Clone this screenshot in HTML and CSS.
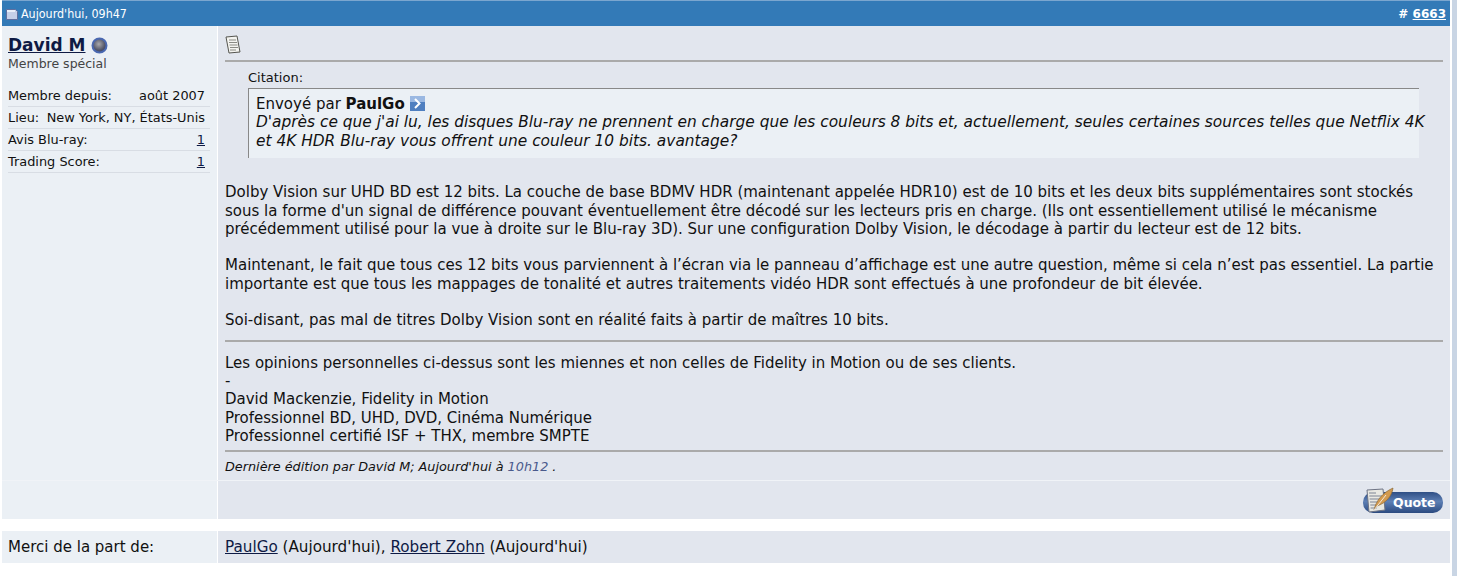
FILE: index.html
```html
<!DOCTYPE html>
<html lang="fr">
<head>
    <meta charset="UTF-8">
    <title>Post 6663</title>
    <link rel="stylesheet" href="styles.css">
</head>
<body>
<div class="page">
    <div class="post">
        <!-- Post header -->
        <div class="post-head">
            <span class="post-date">
                <svg class="date-icon" width="12" height="12" viewBox="0 0 12 12"><path d="M0.500 1.500h9l2 2v8h-11z" fill="#c5cfe8" stroke="#5f6f9f"/><path d="M1 2h8v2H1z" fill="#e9eef9"/></svg>
                Aujourd'hui, 09h47
            </span>
            <span class="post-num"># <a href="#">6663</a></span>
        </div>

        <div class="post-body">
            <div class="user-col">
                <div class="user-name"><a href="#">David M</a>
                    <svg class="status" width="17" height="17" viewBox="0 0 17 17"><defs><radialGradient id="ball" cx="0.45" cy="0.4" r="0.6"><stop offset="0" stop-color="#a9a9ad"/><stop offset="0.7" stop-color="#55586a"/><stop offset="1" stop-color="#3a4266"/></radialGradient></defs><circle cx="8.500" cy="8.500" r="7" fill="url(#ball)" stroke="#4a68b0" stroke-width="2"/></svg>
                </div>
                <div class="user-title">Membre spécial</div>
                <dl class="user-info">
                    <div class="info-row"><dt>Membre depuis:</dt><dd>août 2007</dd></div>
                    <div class="info-row"><dt>Lieu:</dt><dd>New York, NY, États-Unis</dd></div>
                    <div class="info-row"><dt>Avis Blu-ray:</dt><dd><a href="#">1</a></dd></div>
                    <div class="info-row"><dt>Trading Score:</dt><dd><a href="#">1</a></dd></div>
                </dl>
            </div>

            <div class="msg-col">
                <svg class="msg-icon" width="16" height="19" viewBox="0 0 16 19"><path d="M1 2 L12 1 L15 17 L4 18 Z" fill="#f4f4f0" stroke="#55554f"/><path d="M4 5h7M4 7.500h8M4.500 10h8M5 12.500h8M5 15h6" stroke="#8a8a84" fill="none"/></svg>
                <hr class="rule first">
                <div class="quote">
                    <div class="quote-label">Citation:</div>
                    <div class="quote-box">
                        <div>Envoyé par <b>PaulGo</b>
                            <svg class="quote-arrow" width="15" height="15" viewBox="0 0 15 15"><rect width="15" height="15" fill="#4f7fc0"/><rect width="15" height="6" fill="#9ab8e2"/><path d="M5 3l4.500 4.500L5 12" fill="none" stroke="#fff" stroke-width="2"/></svg>
                        </div>
                        <i class="quote-text">D'après ce que j'ai lu, les disques Blu-ray ne prennent en charge que les couleurs 8 bits et, actuellement, seules certaines sources telles que Netflix 4K<br>et 4K HDR Blu-ray vous offrent une couleur 10 bits. avantage?</i>
                    </div>
                </div>
                <p class="para">Dolby Vision sur UHD BD est 12 bits. La couche de base BDMV HDR (maintenant appelée HDR10) est de 10 bits et les deux bits supplémentaires sont stockés<br>sous la forme d'un signal de différence pouvant éventuellement être décodé sur les lecteurs pris en charge. (Ils ont essentiellement utilisé le mécanisme<br>précédemment utilisé pour la vue à droite sur le Blu-ray 3D). Sur une configuration Dolby Vision, le décodage à partir du lecteur est de 12 bits.</p>
                <p class="para">Maintenant, le fait que tous ces 12 bits vous parviennent à l’écran via le panneau d’affichage est une autre question, même si cela n’est pas essentiel. La partie<br>importante est que tous les mappages de tonalité et autres traitements vidéo HDR sont effectués à une profondeur de bit élevée.</p>
                <p class="para last">Soi-disant, pas mal de titres Dolby Vision sont en réalité faits à partir de maîtres 10 bits.</p>
                <hr class="rule">
                <div class="signature">Les opinions personnelles ci-dessus sont les miennes et non celles de Fidelity in Motion ou de ses clients.<br>-<br>David Mackenzie, Fidelity in Motion<br>Professionnel BD, UHD, DVD, Cinéma Numérique<br>Professionnel certifié ISF + THX, membre SMPTE</div>
                <hr class="rule">
                <div class="edited">Dernière édition par David M; Aujourd'hui à <span class="edit-time">10h12</span> .</div>
            </div>
        </div>

        <div class="post-foot">
            <div class="foot-left"></div>
            <div class="foot-right">
                <a class="quote-btn" href="#">
                    <svg class="btn-icon" width="32" height="27" viewBox="0 0 32 27"><path d="M3 3l16-1 2 21-16 2z" fill="#e8e8e2" stroke="#6d7384"/><path d="M5 6h7M5.300 9h13M5.600 12h13M6 15h8M6.300 18h7M6.600 21h6" stroke="#7d8494"/><path d="M10 23C12 14 18 6 29 1c-1 8-7 15-16 18z" fill="#d39a4e" stroke="#8a6a3a" stroke-width="0.7"/><path d="M10 23L22 8" stroke="#fff" stroke-width="0.8"/></svg>
                    Quote
                </a>
            </div>
        </div>
    </div>

    <div class="thanks">
        <div class="thanks-label">Merci de la part de:</div>
        <div class="thanks-list"><a href="#">PaulGo</a> (Aujourd'hui), <a href="#">Robert Zohn</a> (Aujourd'hui)</div>
    </div>
</div>
</body>
</html>
```

FILE: styles.css
```css
/* General */
html, body {
    margin: 0;
    padding: 0;
    height: 100%;
}

body {
    background: #c9d5e4;
    font-family: "DejaVu Sans", Verdana, sans-serif;
    font-size: 15px;
    color: #111;
    overflow: hidden;
}

a {
    color: #0e1a44;
}

.page {
    width: 1452px;
    height: 576px;
    background: #fff;
    padding: 0 0 0 2px;
    box-sizing: border-box;
}

.post {
    width: 1448px;
}

/* Blue header bar */
.post-head {
    display: flex;
    justify-content: space-between;
    align-items: center;
    height: 25px;
    background: #337ab7;
    color: #fff;
    font-size: 12.400px;
    padding: 0 4px;
    border-top: 1px solid #7ba6cf;
}

.post-date {
    display: flex;
    align-items: center;
    gap: 3px;
    font-family: "DejaVu Sans Condensed", "DejaVu Sans", sans-serif;
}

.post-num {
    font-size: 12px;
    font-weight: bold;
}

.post-num a {
    color: #fff;
}

/* Two columns */
.post-body, .post-foot, .thanks {
    display: grid;
    grid-template-columns: 215px minmax(0, 1fr);
    column-gap: 1px;
}

.post-body {
    height: 454px;
}

.user-col {
    background: #ebf0f5;
    padding: 9px 7px 9px 6px;
}

.user-name {
    display: flex;
    align-items: center;
    gap: 5px;
    font-size: 17px;
    font-weight: bold;
    line-height: 20px;
}

.user-title {
    font-size: 12.500px;
    color: #444;
    line-height: 17px;
}

.user-info {
    margin: 13px 0 0;
    font-size: 12.900px;
}

.info-row {
    display: flex;
    justify-content: space-between;
    height: 21px;
    line-height: 21px;
    border-bottom: 1px solid #d8dde4;
}

.info-row dd {
    margin: 0 5px 0 0;
}

.msg-col {
    background: #e2e6ee;
    padding: 9px 7px 0;
    min-width: 0;
}

.msg-icon {
    display: block;
}

/* Horizontal rules */
.rule {
    border: none;
    height: 2px;
    background: #aaa;
    margin: 0;
}

.rule.first {
    margin-top: 6px;
}

/* Quote block */
.quote {
    margin: 7px 24px 0 23px;
}

.quote-label {
    font-size: 13px;
    line-height: 17px;
}

.quote-box {
    margin-top: 2px;
    padding: 6px 7px 8px;
    background: #ebf0f5;
    border-top: 1px solid #888;
    border-left: 1px solid #888;
    line-height: 18.400px;
    white-space: nowrap;
}

.quote-text {
    font-size: 15.400px;
}

.quote-arrow {
    vertical-align: -2px;
}

.para {
    margin: 0 0 18.300px;
    line-height: 18.300px;
}

.quote + .para {
    margin-top: 25px;
}

.para.last {
    margin-bottom: 10px;
}

.signature {
    line-height: 18.400px;
    margin: 12px 0 4px;
}

.edited {
    font-size: 12.800px;
    font-style: italic;
    margin-top: 7px;
}

.edit-time {
    color: #4a5a8c;
}

/* Footer row */
.post-foot {
    height: 38px;
    border-top: 1px solid #f0f3f7;
    box-sizing: content-box;
}

.foot-left {
    background: #ebf0f5;
}

.foot-right {
    background: #e2e6ee;
    display: flex;
    justify-content: flex-end;
    align-items: center;
    padding-right: 7px;
}

.quote-btn {
    position: relative;
    display: block;
    width: 80px;
    height: 21px;
    box-sizing: border-box;
    padding-left: 30px;
    margin-top: 5px;
    background: linear-gradient(#2f4f85, #5d7fb4 45%, #2b4a80);
    border-radius: 10px;
    color: #fff;
    font-size: 12.500px;
    font-weight: bold;
    line-height: 21px;
    text-decoration: none;
}

.btn-icon {
    position: absolute;
    left: 1px;
    top: -5px;
}

/* Thanks row */
.thanks {
    margin: 12px 0 0;
    width: 1448px;
    height: 32px;
    line-height: 32px;
}

.thanks-label {
    background: #ebf0f5;
    padding-left: 6px;
}

.thanks-list {
    background: #e2e6ee;
    padding-left: 7px;
    font-size: 15.200px;
}
```
